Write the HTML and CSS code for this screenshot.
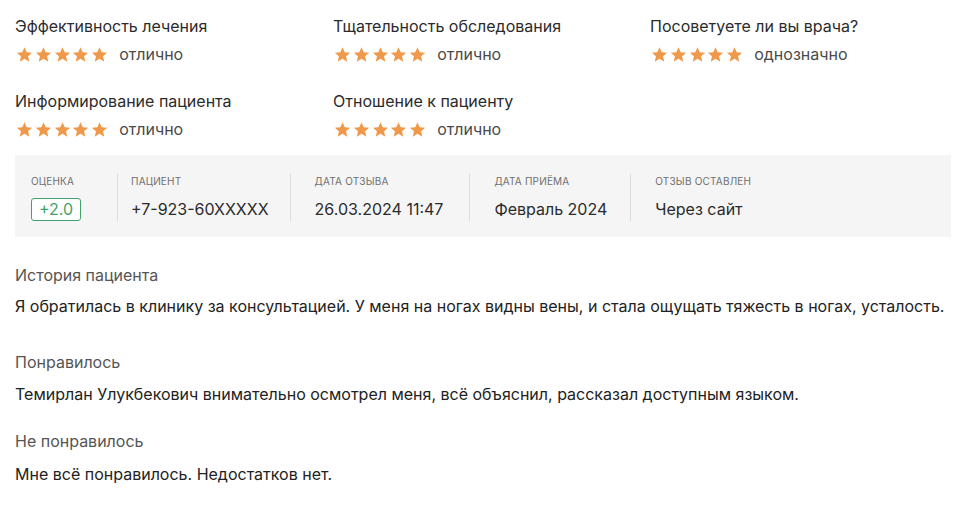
FILE: index.html
```html
<!DOCTYPE html>
<html lang="ru">
<head>
    <meta charset="UTF-8">
    <title>Отзыв пациента</title>
    <link rel="stylesheet" href="styles.css">
</head>
<body>
    <svg width="0" height="0" class="defs">
        <symbol id="star" viewBox="0 0 24 24">
            <path d="M12 1.6l3.1 7.1 7.7.7-5.8 5.1 1.7 7.6L12 18.1l-6.7 4 1.7-7.6-5.8-5.1 7.7-.7z"/>
        </symbol>
    </svg>
    <div class="review">
        <div class="ratings">
            <div class="rating">
                <div class="rating-title">Эффективность лечения</div>
                <div class="rating-row">
                    <span class="stars"><svg><use href="#star"/></svg><svg><use href="#star"/></svg><svg><use href="#star"/></svg><svg><use href="#star"/></svg><svg><use href="#star"/></svg></span>
                    <span class="rating-word">отлично</span>
                </div>
            </div>
            <div class="rating">
                <div class="rating-title">Тщательность обследования</div>
                <div class="rating-row">
                    <span class="stars"><svg><use href="#star"/></svg><svg><use href="#star"/></svg><svg><use href="#star"/></svg><svg><use href="#star"/></svg><svg><use href="#star"/></svg></span>
                    <span class="rating-word">отлично</span>
                </div>
            </div>
            <div class="rating">
                <div class="rating-title">Посоветуете ли вы врача?</div>
                <div class="rating-row">
                    <span class="stars"><svg><use href="#star"/></svg><svg><use href="#star"/></svg><svg><use href="#star"/></svg><svg><use href="#star"/></svg><svg><use href="#star"/></svg></span>
                    <span class="rating-word">однозначно</span>
                </div>
            </div>
            <div class="rating">
                <div class="rating-title">Информирование пациента</div>
                <div class="rating-row">
                    <span class="stars"><svg><use href="#star"/></svg><svg><use href="#star"/></svg><svg><use href="#star"/></svg><svg><use href="#star"/></svg><svg><use href="#star"/></svg></span>
                    <span class="rating-word">отлично</span>
                </div>
            </div>
            <div class="rating">
                <div class="rating-title">Отношение к пациенту</div>
                <div class="rating-row">
                    <span class="stars"><svg><use href="#star"/></svg><svg><use href="#star"/></svg><svg><use href="#star"/></svg><svg><use href="#star"/></svg><svg><use href="#star"/></svg></span>
                    <span class="rating-word">отлично</span>
                </div>
            </div>
        </div>

        <div class="meta">
            <div class="meta-cell meta-score">
                <div class="meta-label">Оценка</div>
                <div class="meta-value"><span class="score">+2.0</span></div>
            </div>
            <div class="meta-cell meta-patient">
                <div class="meta-label">Пациент</div>
                <div class="meta-value">+7-923-60XXXXX</div>
            </div>
            <div class="meta-cell meta-review-date">
                <div class="meta-label">Дата отзыва</div>
                <div class="meta-value">26.03.2024 11:47</div>
            </div>
            <div class="meta-cell meta-visit-date">
                <div class="meta-label">Дата приёма</div>
                <div class="meta-value">Февраль 2024</div>
            </div>
            <div class="meta-cell meta-last">
                <div class="meta-label">Отзыв оставлен</div>
                <div class="meta-value">Через сайт</div>
            </div>
        </div>

        <div class="section section-story">
            <div class="section-title">История пациента</div>
            <p class="section-text">Я обратилась в клинику за консультацией. У меня на ногах видны вены, и стала ощущать тяжесть в ногах, усталость.</p>
        </div>
        <div class="section section-liked">
            <div class="section-title">Понравилось</div>
            <p class="section-text">Темирлан Улукбекович внимательно осмотрел меня, всё объяснил, рассказал доступным языком.</p>
        </div>
        <div class="section section-disliked">
            <div class="section-title">Не понравилось</div>
            <p class="section-text">Мне всё понравилось. Недостатков нет.</p>
        </div>
    </div>
</body>
</html>
```

FILE: styles.css
```css
body {
    margin: 0;
    background: #ffffff;
    font-family: Inter, "Noto Sans", sans-serif;
    color: #222222;
}
.defs {
    position: absolute;
}
.review {
    padding: 16px 13px 0 15px;
}
.ratings {
    display: grid;
    grid-template-columns: 318px 317px 1fr;
    row-gap: 27px;
}
.rating-title {
    font-size: 16px;
    line-height: 21px;
    color: #2b2b2b;
}
.rating-row {
    display: flex;
    align-items: center;
    margin-top: 7px;
    height: 20px;
}
.stars {
    display: flex;
    gap: 1.8px;
    margin-left: 1px;
}
.stars svg {
    width: 17px;
    height: 17px;
    fill: #f0994a;
}
.rating-word {
    margin-left: 11px;
    font-size: 16px;
    color: #4a4a4a;
}
.meta {
    display: flex;
    margin-top: 16px;
    padding: 19px 0 16px;
    background: #f5f5f5;
}
.meta-cell {
    padding: 0 24px;
    border-right: 1px solid #dcdcdc;
}
.meta-score {
    width: 71px;
    padding-left: 16px;
    padding-right: 15px;
}
.meta-patient {
    padding-left: 13px;
    padding-right: 21px;
}
.meta-review-date {
    padding-right: 26px;
}
.meta-visit-date {
    padding-right: 23px;
}
.meta-last {
    border-right: none;
}
.meta-label {
    font-size: 10px;
    line-height: 14px;
    text-transform: uppercase;
    color: #6f6f6f;
    letter-spacing: 0.2px;
}
.meta-value {
    margin-top: 11px;
    font-size: 16px;
    line-height: 20px;
    color: #2b2b2b;
    white-space: nowrap;
}
.score {
    display: inline-block;
    margin-top: -2px;
    padding: 0 7px;
    line-height: 21px;
    border: 1px solid #3fa36b;
    border-radius: 3px;
    color: #3fa36b;
    background: #ffffff;
}
.section-title {
    font-size: 16px;
    line-height: 20px;
    color: #555555;
}
.section-text {
    margin: 11px 0 0;
    font-size: 16px;
    line-height: 20px;
    color: #222222;
}
.section-story {
    margin-top: 28px;
}
.section-liked {
    margin-top: 36px;
}
.section-liked .section-text {
    margin-top: 12px;
}
.section-disliked {
    margin-top: 27px;
}
.section-disliked .section-text {
    margin-top: 13px;
}
```
